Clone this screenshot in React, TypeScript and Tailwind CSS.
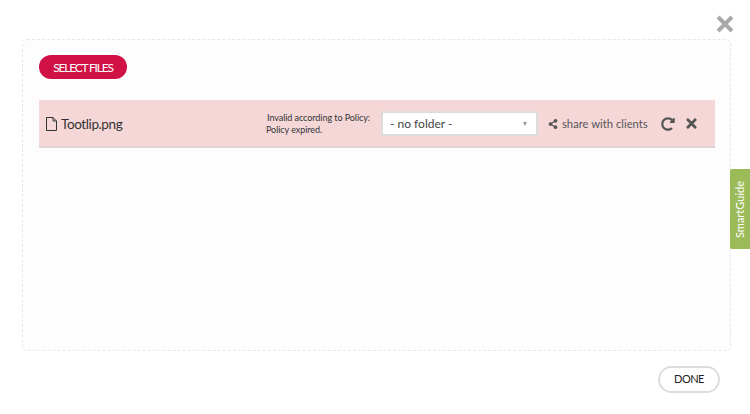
import { FaShareAlt, FaRedoAlt, FaTimes } from "react-icons/fa";

export default function App() {
  return (
    <main className="relative flex h-[414px] w-[750px] flex-col overflow-hidden bg-white pt-[39px] pr-[19px] pl-[22px] font-['Lato','Open_Sans',sans-serif] text-[#333]">
      <button className="absolute top-[12px] right-[14px] text-[#a9a9a9]">
        <svg width="22" height="24" viewBox="0 0 22 24">
          <path d="M4 5 L18 19 M18 5 L4 19" stroke="currentColor" strokeWidth="4" fill="none" />
        </svg>
      </button>

      <section className="h-[312px] rounded-[5px] border border-dashed border-[#e8e8e8] bg-[#fdfdfd] pt-[15px] pr-[15px] pl-[16px]">
        <button className="block h-[24px] w-[88px] rounded-full bg-[#d01145] pt-[1px] text-[12px] tracking-[-1.2px] text-white">
          SELECT FILES
        </button>

        <div className="mt-[21px] flex h-[48px] items-center border-b-2 border-[#e0d2d6] bg-[#f5d7d8] pt-[1px] pl-[7px]">
          <svg width="11" height="14" viewBox="0 0 11 14" className="shrink-0">
            <path d="M0.5 0.5 H7 L10.5 4 V13.5 H0.5 Z M7 0.5 V4 H10.5" stroke="#333" strokeWidth="1" fill="none" />
          </svg>
          <span className="ml-[4px] w-[204px] pt-[2px] text-[13.5px] tracking-[-0.4px]">Tootlip.png</span>
          <div className="w-[105px] pt-[1px] pl-[1px] text-[9px] leading-[12px] tracking-[-0.06px] whitespace-nowrap text-[#333]">
            <p className="pl-[1px]">Invalid according to Policy:</p>
            <p>Policy expired.</p>
          </div>
          <div className="ml-[11px] flex h-[25px] w-[157px] items-center justify-between border-2 border-[#ddd] bg-white pr-[9px] pl-[7px] text-[12px] text-[#444]">
            <span className="pt-[1px]">- no folder -</span>
            <span className="h-0 w-0 border-x-[2.5px] border-t-[4px] border-x-transparent border-t-[#999]" />
          </div>
          <FaShareAlt className="ml-[10px] text-[10px] text-[#555]" />
          <span className="ml-[4px] pt-[1px] text-[11.25px] text-[#555]">share with clients</span>
          <FaRedoAlt className="ml-[13px] text-[14px] text-[#555]" />
          <FaTimes className="ml-[9px] text-[15px] text-[#555]" />
        </div>
      </section>

      <aside className="absolute top-[169px] right-0 flex h-[80px] w-[20px] items-center justify-center rounded-l-[2px] bg-[#9bbb59]">
        <span className="rotate-180 text-[11px] text-white [writing-mode:vertical-rl]">SmartGuide</span>
      </aside>

      <div className="mt-[15px] flex justify-end pr-[11px]">
        <button className="h-[27px] w-[62px] rounded-full border-2 border-[#ddd] bg-white text-[11px] tracking-[-0.5px] text-[#222]">
          DONE
        </button>
      </div>
    </main>
  );
}
